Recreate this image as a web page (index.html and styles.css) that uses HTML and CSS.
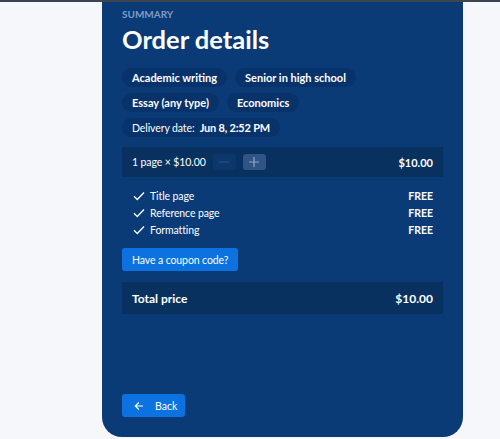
FILE: index.html
```html
<!DOCTYPE html>
<html>
<head>
<meta charset="utf-8">
<link rel="stylesheet" href="styles.css">
</head>
<body>
<div class="topline"></div>
<div class="page">
  <div class="card">
    <div class="eyebrow">SUMMARY</div>
    <h1 class="title">Order details</h1>
    <div class="chips">
      <span class="chip">Academic writing</span>
      <span class="chip">Senior in high school</span>
      <span class="chip">Essay (any type)</span>
      <span class="chip">Economics</span>
      <span class="chip chip-light">Delivery date:&nbsp; <b>Jun 8, 2:52 PM</b></span>
    </div>
    <div class="pages-row">
      <span class="pages-label">1 page × $10.00</span>
      <span class="stepper">
        <span class="step step-off"><svg width="12" height="12" viewBox="0 0 12 12"><path d="M1 6h10" stroke="#2a4f80" stroke-width="1.2"/></svg></span>
        <span class="step step-on"><svg width="12" height="12" viewBox="0 0 12 12"><path d="M1 6h10M6 1v10" stroke="#8fa7c6" stroke-width="1.2"/></svg></span>
      </span>
      <span class="price">$10.00</span>
    </div>
    <ul class="extras">
      <li class="extra"><svg class="check" width="12" height="10" viewBox="0 0 12 10"><path d="M1 5.2l3.3 3.3L11 1.5" fill="none" stroke="#fff" stroke-width="1.3"/></svg><span class="extra-name">Title page</span><span class="free">FREE</span></li>
      <li class="extra"><svg class="check" width="12" height="10" viewBox="0 0 12 10"><path d="M1 5.2l3.3 3.3L11 1.5" fill="none" stroke="#fff" stroke-width="1.3"/></svg><span class="extra-name">Reference page</span><span class="free">FREE</span></li>
      <li class="extra"><svg class="check" width="12" height="10" viewBox="0 0 12 10"><path d="M1 5.2l3.3 3.3L11 1.5" fill="none" stroke="#fff" stroke-width="1.3"/></svg><span class="extra-name">Formatting</span><span class="free">FREE</span></li>
    </ul>
    <div><button class="btn coupon">Have a coupon code?</button></div>
    <div class="total">
      <span>Total price</span>
      <span>$10.00</span>
    </div>
    <div class="footer">
      <button class="btn back"><svg width="10" height="10" viewBox="0 0 10 10"><path d="M9 5H1.5M4.8 1.5L1.3 5l3.5 3.5" fill="none" stroke="#fff" stroke-width="1.1"/></svg><span>Back</span></button>
    </div>
  </div>
</div>
</body>
</html>
```
FILE: styles.css
```css
* { box-sizing: border-box; }
html, body { margin: 0; padding: 0; }
body {
  background: #f5f7fa;
  font-family: "Lato", "Noto Sans", sans-serif;
  color: #fff;
  width: 500px;
  height: 439px;
  overflow: hidden;
  position: relative;
}
.topline {
  position: absolute;
  top: 0; left: 0; right: 0;
  height: 2px;
  background: #3d4650;
  z-index: 2;
}
.page {
  padding-left: 102px;
}
.card {
  width: 361px;
  height: 437px;
  background: #0a3b77;
  border-radius: 0 0 20px 20px;
  padding: 7px 20px 20px;
  display: flex;
  flex-direction: column;
}
.eyebrow {
  font-size: 10px;
  font-weight: 700;
  color: #7f9bc3;
  line-height: 14px;
}
.title {
  margin: 3px 0 0;
  font-size: 25.5px;
  font-weight: 700;
  line-height: 30px;
}
.chips {
  display: flex;
  flex-wrap: wrap;
  gap: 6px 8px;
  margin-top: 14px;
}
.chip {
  background: #08326a;
  border-radius: 10px;
  height: 19px;
  line-height: 19px;
  padding: 0 10px;
  font-size: 11px;
  font-weight: 700;
}
.chip-light { font-weight: 400; font-size: 10.5px; letter-spacing: -0.1px; }
.chip-light b { font-weight: 700; font-size: 11px; letter-spacing: -0.2px; }
.pages-row {
  margin-top: 10px;
  height: 30px;
  background: #08315f;
  display: flex;
  align-items: center;
  padding: 0 10px;
  font-size: 10.5px;
  letter-spacing: -0.1px;
}
.stepper {
  display: flex;
  gap: 7px;
  margin-left: 7px;
}
.step {
  width: 23px;
  height: 16px;
  border-radius: 3px;
  display: flex;
  align-items: center;
  justify-content: center;
}
.step-off { background: #0b376c; }
.step-on { background: #2f5485; }
.price { margin-left: auto; font-weight: 700; font-size: 11px; letter-spacing: 0; }
.extras {
  list-style: none;
  margin: 10px 0 0;
  padding: 0 10px;
}
.extra {
  display: flex;
  align-items: center;
  height: 17px;
  font-size: 10.5px;
  letter-spacing: -0.1px;
}
.check { margin-left: 1px; margin-right: 5px; }
.free { margin-left: auto; font-weight: 700; letter-spacing: 0; }
.btn {
  font-family: inherit;
  border: 0;
  color: #fff;
  background: #0b72e0;
  border-radius: 3px;
  cursor: pointer;
}
.coupon {
  margin-top: 10px;
  height: 23px;
  padding: 0 10px;
  font-size: 10.5px;
  letter-spacing: -0.1px;
}
.total {
  margin-top: 11px;
  height: 32px;
  background: #08315f;
  display: flex;
  align-items: center;
  justify-content: space-between;
  padding: 0 10px;
  font-size: 12px;
  font-weight: 700;
}
.footer {
  margin-top: auto;
}
.back {
  height: 23px;
  width: 63px;
  display: flex;
  align-items: center;
  padding: 0 0 0 12px;
  font-size: 10.5px;
  gap: 11px;
}
```
